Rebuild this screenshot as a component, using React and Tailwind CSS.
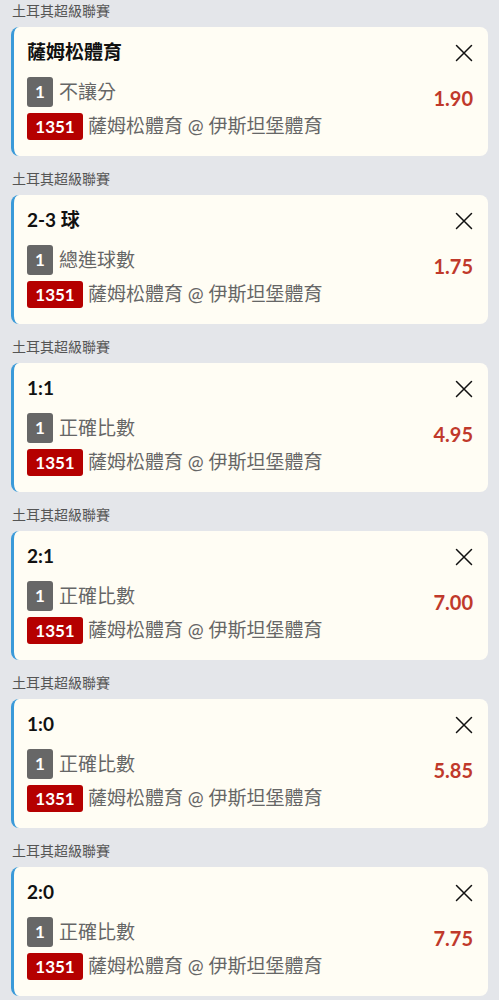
import React from "react";

const items = [
  { title: "薩姆松體育", market: "不讓分", odds: "1.90" },
  { title: "2-3 球", market: "總進球數", odds: "1.75" },
  { title: "1:1", market: "正確比數", odds: "4.95" },
  { title: "2:1", market: "正確比數", odds: "7.00" },
  { title: "1:0", market: "正確比數", odds: "5.85" },
  { title: "2:0", market: "正確比數", odds: "7.75" },
];

function CloseIcon() {
  return (
    <svg width="18" height="18" viewBox="0 0 18 18" fill="none">
      <path d="M1.5 1.5 L16.5 16.5 M16.5 1.5 L1.5 16.5" stroke="#111" strokeWidth="1.5" strokeLinecap="round" />
    </svg>
  );
}

function Card({ item }) {
  return (
    <div className="mb-[12px]">
      <div className="h-[22px] leading-[22px] pl-[12px] text-[14px] text-[#555]">土耳其超級聯賽</div>
      <div className="mt-[5px] mx-[11px] h-[129px] rounded-[8px] border-l-[3px] border-[#3a9ad9] bg-[#fffdf4] flex justify-between">
        <div className="pl-[13px] pt-[14px] flex flex-col">
          <div className="h-[22px] leading-[22px] text-[19px] font-bold text-[#111]">{item.title}</div>
          <div className="mt-[14px] flex items-center h-[30px]">
            <span className="w-[26px] h-[30px] rounded-[3px] bg-[#676767] text-white text-[17px] font-bold flex items-center justify-center">1</span>
            <span className="ml-[6px] text-[19px] text-[#666]">{item.market}</span>
          </div>
          <div className="mt-[6px] flex items-center h-[27px]">
            <span className="w-[56px] h-[27px] rounded-[3px] bg-[#b50000] text-white text-[17px] font-bold flex items-center justify-center">1351</span>
            <span className="ml-[5px] text-[19px] text-[#666] whitespace-nowrap">薩姆松體育 @ 伊斯坦堡體育</span>
          </div>
        </div>
        <div className="flex flex-col items-end pr-[15px]">
          <div className="mt-[17px]">
            <CloseIcon />
          </div>
          <div className="mt-[24px] text-[20px] font-bold text-[#c0392b] leading-[24px]">{item.odds}</div>
        </div>
      </div>
    </div>
  );
}

export default function App() {
  return (
    <div className="w-[499px] min-h-[1000px] bg-[#e4e6ea]" style={{ fontFamily: "Lato, 'Noto Sans CJK TC', sans-serif" }}>
      {items.map((it, i) => (
        <Card key={i} item={it} />
      ))}
    </div>
  );
}
